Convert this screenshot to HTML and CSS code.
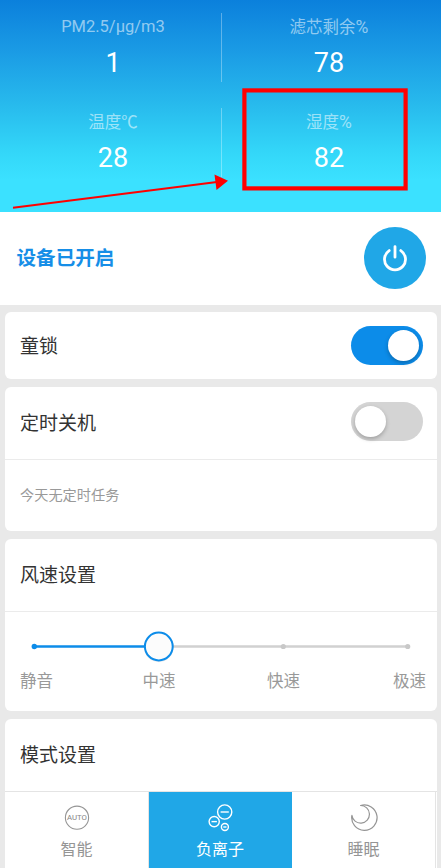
FILE: index.html
```html
<!DOCTYPE html>
<html lang="zh-CN">
<head>
<meta charset="utf-8">
<meta name="viewport" content="width=device-width, initial-scale=1">
<title>空气净化器</title>
<link rel="stylesheet" href="styles.css">
</head>
<body>
<main class="app">
  <header class="stats">
    <div class="stat divided"><span class="stat-label latin">PM2.5/µg/m3</span><span class="stat-value">1</span></div>
    <div class="stat"><span class="stat-label">滤芯剩余<span class="percent">%</span></span><span class="stat-value">78</span></div>
    <div class="stat divided"><span class="stat-label">温度℃</span><span class="stat-value">28</span></div>
    <div class="stat"><span class="stat-label">湿度<span class="percent">%</span></span><span class="stat-value">82</span></div>
    <svg class="annotation" viewBox="0 0 441 212" width="441" height="212" fill="none" aria-hidden="true">
      <rect x="244.4" y="90.4" width="161.2" height="98" stroke="#f00" stroke-width="4.2"/>
      <path d="M13 207.8 217 182" stroke="#f00" stroke-width="1.9"/>
      <path d="M214.5 174.5 228 180.7 216.5 190Z" fill="#f00"/>
    </svg>
  </header>

  <section class="power">
    <h1 class="power-title">设备已开启</h1>
    <button class="power-button" aria-label="电源">
      <svg viewBox="0 0 26 28" width="26" height="28" fill="none" stroke="#fff" stroke-width="2.8" stroke-linecap="round" aria-hidden="true">
        <path d="M13 2.6V13.2M7.2 6.6A10.5 10.5 0 1 0 18.8 6.6"/>
      </svg>
    </button>
  </section>

  <div class="cards">
    <section class="card">
      <div class="row row-lock"><h2 class="title">童锁</h2><span class="switch on"><i class="knob"></i></span></div>
    </section>

    <section class="card">
      <div class="row row-timer"><h2 class="title">定时关机</h2><span class="switch"><i class="knob"></i></span></div>
      <p class="note">今天无定时任务</p>
    </section>

    <section class="card">
      <div class="row row-speed"><h2 class="title">风速设置</h2></div>
      <div class="speed">
        <svg class="slider" viewBox="0 0 432 36" width="432" height="36" aria-hidden="true">
          <path d="M153 17.5H403" stroke="#d1d1d1" stroke-width="2.5"/>
          <circle cx="278.3" cy="17.5" r="2.6" fill="#c8c8c8"/>
          <circle cx="402.7" cy="17.5" r="2.6" fill="#c8c8c8"/>
          <path d="M29 17.5H153" stroke="#0c8ce9" stroke-width="2.4"/>
          <circle cx="29.3" cy="17.5" r="2.7" fill="#0c8ce9"/>
          <circle cx="153.8" cy="18.4" r="14.8" fill="#000" opacity=".07"/>
          <circle cx="153.8" cy="17.5" r="13.9" fill="#fcfcfc" stroke="#0c8ce9" stroke-width="2"/>
        </svg>
        <div class="speed-labels"><span>静音</span><span>中速</span><span>快速</span><span>极速</span></div>
      </div>
    </section>

    <section class="card card-modes">
      <div class="row"><h2 class="title">模式设置</h2></div>
      <nav class="modes">
        <div class="mode">
          <svg viewBox="0 0 30 28" width="30" height="28" fill="none" aria-hidden="true">
            <circle cx="15" cy="13.7" r="11.6" stroke="#959595" stroke-width="1.1"/>
            <text class="auto-text" x="15" y="16.4" text-anchor="middle">AUTO</text>
          </svg>
          <span>智能</span>
        </div>
        <div class="mode active">
          <svg viewBox="0 0 30 28" width="30" height="28" fill="none" stroke="#fff" stroke-width="1.4" aria-hidden="true">
            <circle cx="19.7" cy="8" r="7.1"/><path d="M15.6 8H23.8"/>
            <circle cx="9.2" cy="17.6" r="5.1"/><path d="M6.5 17.6H11.9"/>
            <circle cx="19.9" cy="23" r="3.5"/><path d="M18.3 23H21.5"/>
          </svg>
          <span>负离子</span>
        </div>
        <div class="mode">
          <svg viewBox="0 0 30 28" width="30" height="28" fill="none" stroke="#959595" stroke-width="1.2" stroke-linejoin="round" aria-hidden="true">
            <path d="M11.6 1.5A12.7 12.7 0 1 1 2.9 11.3A8.8 8.8 0 1 0 11.6 1.5Z"/>
          </svg>
          <span>睡眠</span>
        </div>
      </nav>
    </section>
  </div>
</main>
</body>
</html>
```

FILE: styles.css
```css
* { box-sizing: border-box; }

body {
  margin: 0;
  background: #e9e9e9;
  font-family: "Noto Sans CJK SC", sans-serif;
  color: #333;
}

h1, h2, p { margin: 0; }

.app {
  width: 441px;
  height: 868px;
  overflow: hidden;
}

.stats {
  position: relative;
  height: 212px;
  padding: 13px 4px 0 5px;
  display: grid;
  grid-template-columns: 216px 216px;
  grid-template-rows: 69px 69px;
  row-gap: 26px;
  background: linear-gradient(#0b80dc 0, #1b9ce5 25%, #28bbed 50%, #34d8f9 73%, #3be1ff 85%, #3be1ff 100%);
}

.stat {
  display: flex;
  flex-direction: column;
  align-items: center;
}

.divided { box-shadow: 1px 0 0 rgba(255, 255, 255, .32); }

.stat-label {
  height: 26px;
  line-height: 26px;
  font-size: 16.5px;
  color: rgba(255, 255, 255, .55);
}

.latin {
  font-family: Roboto, "Noto Sans CJK SC", sans-serif;
  line-height: 28px;
  letter-spacing: 0;
}

.percent {
  font-family: Roboto, sans-serif;
  font-size: 17.5px;
}

.stat-value {
  margin-top: 5px;
  line-height: 38px;
  font-family: Roboto, sans-serif;
  font-size: 27px;
  color: #fff;
}

.annotation {
  position: absolute;
  left: 0;
  top: 0;
}

.power {
  height: 93px;
  padding: 0 15px 1px 16.5px;
  display: flex;
  align-items: center;
  justify-content: space-between;
  background: #fff;
}

.power-title {
  padding-bottom: 3px;
  font-size: 19.6px;
  line-height: 30px;
  font-weight: 700;
  color: #168ee7;
}

.power-button {
  width: 62px;
  height: 62px;
  padding: 0;
  border: 0;
  border-radius: 50%;
  display: grid;
  place-items: center;
  background: #20a7e7;
}

.cards {
  padding: 6.5px 4px 0 5px;
  display: flex;
  flex-direction: column;
  gap: 8px;
}

.card {
  border-radius: 6px;
  background: #fff;
  overflow: hidden;
}

.row {
  height: 72px;
  padding: 0 14px 0 15px;
  display: flex;
  align-items: center;
  justify-content: space-between;
}

.row-lock { height: 67.8px; }
.row-timer .switch { margin-bottom: 4px; }

.title {
  padding-bottom: 3px;
  font-size: 19px;
  line-height: 28px;
  font-weight: 400;
}

.row-lock .title,
.row-speed .title { padding-bottom: 1.5px; }

.switch {
  width: 72px;
  height: 38.5px;
  padding: 3.5px 4px 3.5px 3.5px;
  border-radius: 20px;
  display: flex;
  background: #d4d4d4;
}

.switch.on {
  justify-content: flex-end;
  background: #0c8ce9;
}

.knob {
  width: 31px;
  height: 31px;
  border-radius: 50%;
  background: #fff;
  box-shadow: 0 2px 4px rgba(0, 0, 0, .25);
}

.note {
  height: 71.4px;
  padding-left: 15px;
  border-top: 1px solid #ebebeb;
  font-size: 14.2px;
  line-height: 68px;
  color: #999;
}

.speed {
  height: 100.5px;
  padding-top: 17px;
  border-top: 1px solid #ebebeb;
}

.slider { display: block; }

.speed-labels {
  display: grid;
  grid-template-columns: 122.5px 124.5px 126px auto;
  padding-left: 15px;
  font-size: 16.5px;
  line-height: 31px;
  color: #999;
}

.card-modes {
  border-bottom-left-radius: 0;
  border-bottom-right-radius: 0;
}

.modes {
  height: 78px;
  display: grid;
  grid-template-columns: 144px 143px 144px;
  border-top: 1px solid #e4e4e4;
}

.mode {
  padding-top: 12px;
  display: flex;
  flex-direction: column;
  align-items: center;
  border-right: 1px solid #e4e4e4;
  font-size: 16px;
  line-height: 32px;
  color: #959595;
}

.mode.active {
  background: #20a7e7;
  border-color: #20a7e7;
  color: #fff;
}

.auto-text {
  font: 7.8px Roboto, sans-serif;
  fill: #858585;
}
```
